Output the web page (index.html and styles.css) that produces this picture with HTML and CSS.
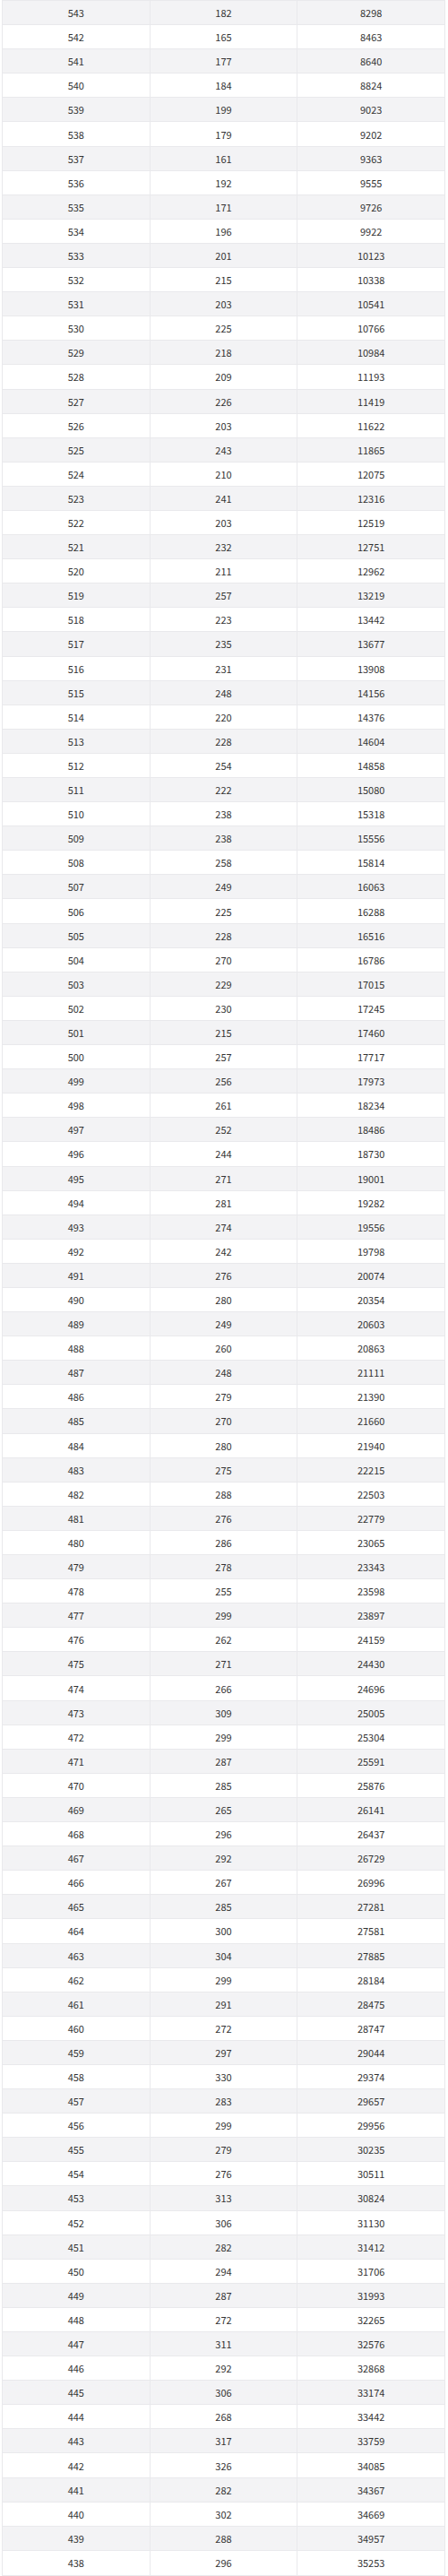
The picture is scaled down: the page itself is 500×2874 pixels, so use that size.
FILE: index.html
```html
<!DOCTYPE html>
<html>
<head>
<meta charset="utf-8">
<link rel="stylesheet" href="styles.css">
</head>
<body>
<table class="score-table">
<tbody>
<tr><td>543</td><td>182</td><td>8298</td></tr>
<tr><td>542</td><td>165</td><td>8463</td></tr>
<tr><td>541</td><td>177</td><td>8640</td></tr>
<tr><td>540</td><td>184</td><td>8824</td></tr>
<tr><td>539</td><td>199</td><td>9023</td></tr>
<tr><td>538</td><td>179</td><td>9202</td></tr>
<tr><td>537</td><td>161</td><td>9363</td></tr>
<tr><td>536</td><td>192</td><td>9555</td></tr>
<tr><td>535</td><td>171</td><td>9726</td></tr>
<tr><td>534</td><td>196</td><td>9922</td></tr>
<tr><td>533</td><td>201</td><td>10123</td></tr>
<tr><td>532</td><td>215</td><td>10338</td></tr>
<tr><td>531</td><td>203</td><td>10541</td></tr>
<tr><td>530</td><td>225</td><td>10766</td></tr>
<tr><td>529</td><td>218</td><td>10984</td></tr>
<tr><td>528</td><td>209</td><td>11193</td></tr>
<tr><td>527</td><td>226</td><td>11419</td></tr>
<tr><td>526</td><td>203</td><td>11622</td></tr>
<tr><td>525</td><td>243</td><td>11865</td></tr>
<tr><td>524</td><td>210</td><td>12075</td></tr>
<tr><td>523</td><td>241</td><td>12316</td></tr>
<tr><td>522</td><td>203</td><td>12519</td></tr>
<tr><td>521</td><td>232</td><td>12751</td></tr>
<tr><td>520</td><td>211</td><td>12962</td></tr>
<tr><td>519</td><td>257</td><td>13219</td></tr>
<tr><td>518</td><td>223</td><td>13442</td></tr>
<tr><td>517</td><td>235</td><td>13677</td></tr>
<tr><td>516</td><td>231</td><td>13908</td></tr>
<tr><td>515</td><td>248</td><td>14156</td></tr>
<tr><td>514</td><td>220</td><td>14376</td></tr>
<tr><td>513</td><td>228</td><td>14604</td></tr>
<tr><td>512</td><td>254</td><td>14858</td></tr>
<tr><td>511</td><td>222</td><td>15080</td></tr>
<tr><td>510</td><td>238</td><td>15318</td></tr>
<tr><td>509</td><td>238</td><td>15556</td></tr>
<tr><td>508</td><td>258</td><td>15814</td></tr>
<tr><td>507</td><td>249</td><td>16063</td></tr>
<tr><td>506</td><td>225</td><td>16288</td></tr>
<tr><td>505</td><td>228</td><td>16516</td></tr>
<tr><td>504</td><td>270</td><td>16786</td></tr>
<tr><td>503</td><td>229</td><td>17015</td></tr>
<tr><td>502</td><td>230</td><td>17245</td></tr>
<tr><td>501</td><td>215</td><td>17460</td></tr>
<tr><td>500</td><td>257</td><td>17717</td></tr>
<tr><td>499</td><td>256</td><td>17973</td></tr>
<tr><td>498</td><td>261</td><td>18234</td></tr>
<tr><td>497</td><td>252</td><td>18486</td></tr>
<tr><td>496</td><td>244</td><td>18730</td></tr>
<tr><td>495</td><td>271</td><td>19001</td></tr>
<tr><td>494</td><td>281</td><td>19282</td></tr>
<tr><td>493</td><td>274</td><td>19556</td></tr>
<tr><td>492</td><td>242</td><td>19798</td></tr>
<tr><td>491</td><td>276</td><td>20074</td></tr>
<tr><td>490</td><td>280</td><td>20354</td></tr>
<tr><td>489</td><td>249</td><td>20603</td></tr>
<tr><td>488</td><td>260</td><td>20863</td></tr>
<tr><td>487</td><td>248</td><td>21111</td></tr>
<tr><td>486</td><td>279</td><td>21390</td></tr>
<tr><td>485</td><td>270</td><td>21660</td></tr>
<tr><td>484</td><td>280</td><td>21940</td></tr>
<tr><td>483</td><td>275</td><td>22215</td></tr>
<tr><td>482</td><td>288</td><td>22503</td></tr>
<tr><td>481</td><td>276</td><td>22779</td></tr>
<tr><td>480</td><td>286</td><td>23065</td></tr>
<tr><td>479</td><td>278</td><td>23343</td></tr>
<tr><td>478</td><td>255</td><td>23598</td></tr>
<tr><td>477</td><td>299</td><td>23897</td></tr>
<tr><td>476</td><td>262</td><td>24159</td></tr>
<tr><td>475</td><td>271</td><td>24430</td></tr>
<tr><td>474</td><td>266</td><td>24696</td></tr>
<tr><td>473</td><td>309</td><td>25005</td></tr>
<tr><td>472</td><td>299</td><td>25304</td></tr>
<tr><td>471</td><td>287</td><td>25591</td></tr>
<tr><td>470</td><td>285</td><td>25876</td></tr>
<tr><td>469</td><td>265</td><td>26141</td></tr>
<tr><td>468</td><td>296</td><td>26437</td></tr>
<tr><td>467</td><td>292</td><td>26729</td></tr>
<tr><td>466</td><td>267</td><td>26996</td></tr>
<tr><td>465</td><td>285</td><td>27281</td></tr>
<tr><td>464</td><td>300</td><td>27581</td></tr>
<tr><td>463</td><td>304</td><td>27885</td></tr>
<tr><td>462</td><td>299</td><td>28184</td></tr>
<tr><td>461</td><td>291</td><td>28475</td></tr>
<tr><td>460</td><td>272</td><td>28747</td></tr>
<tr><td>459</td><td>297</td><td>29044</td></tr>
<tr><td>458</td><td>330</td><td>29374</td></tr>
<tr><td>457</td><td>283</td><td>29657</td></tr>
<tr><td>456</td><td>299</td><td>29956</td></tr>
<tr><td>455</td><td>279</td><td>30235</td></tr>
<tr><td>454</td><td>276</td><td>30511</td></tr>
<tr><td>453</td><td>313</td><td>30824</td></tr>
<tr><td>452</td><td>306</td><td>31130</td></tr>
<tr><td>451</td><td>282</td><td>31412</td></tr>
<tr><td>450</td><td>294</td><td>31706</td></tr>
<tr><td>449</td><td>287</td><td>31993</td></tr>
<tr><td>448</td><td>272</td><td>32265</td></tr>
<tr><td>447</td><td>311</td><td>32576</td></tr>
<tr><td>446</td><td>292</td><td>32868</td></tr>
<tr><td>445</td><td>306</td><td>33174</td></tr>
<tr><td>444</td><td>268</td><td>33442</td></tr>
<tr><td>443</td><td>317</td><td>33759</td></tr>
<tr><td>442</td><td>326</td><td>34085</td></tr>
<tr><td>441</td><td>282</td><td>34367</td></tr>
<tr><td>440</td><td>302</td><td>34669</td></tr>
<tr><td>439</td><td>288</td><td>34957</td></tr>
<tr><td>438</td><td>296</td><td>35253</td></tr>
</tbody>
</table>
</body>
</html>
```
FILE: styles.css
```css
html, body {
  margin: 0;
  padding: 0;
  background: #ffffff;
}

.score-table {
  margin-left: 2px;
  width: 495px;
  height: 2874px;
  border-collapse: collapse;
  table-layout: fixed;
  font-family: "Noto Sans CJK SC", "Open Sans", sans-serif;
  font-size: 11px;
  color: #333333;
}

.score-table td {
  border: 1px solid #e9e9ec;
  text-align: center;
  vertical-align: middle;
  padding: 0;
  line-height: 16px;
}

.score-table tr:nth-child(odd) td {
  background: #f3f3f5;
}

.score-table tr:nth-child(even) td {
  background: #ffffff;
}
```
